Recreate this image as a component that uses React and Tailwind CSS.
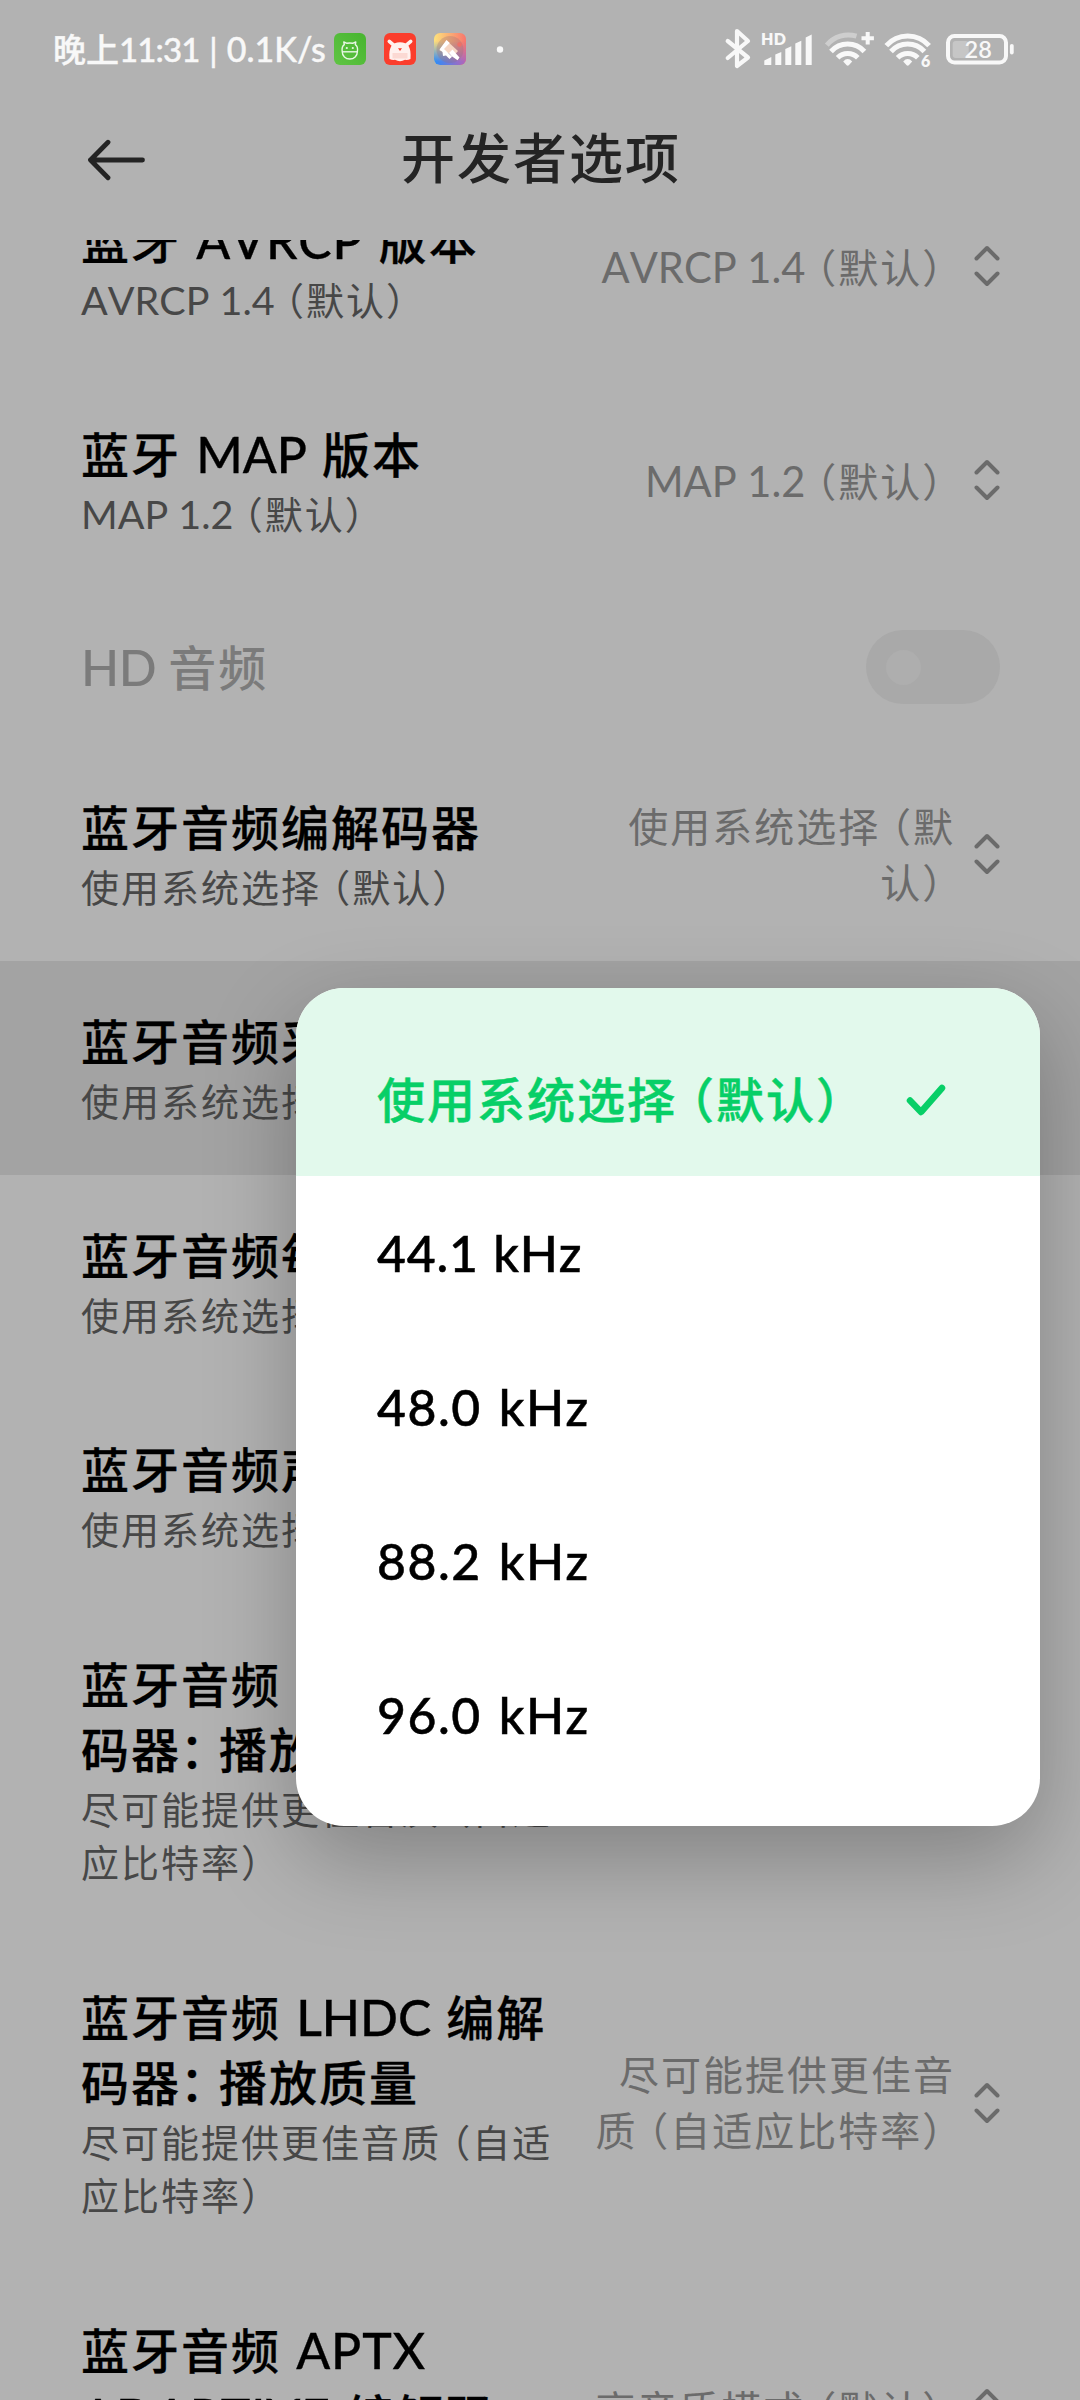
import React from "react";

const ROWS = [
  { id: "avrcp", title: ["蓝牙 AVRCP 版本"], summary: ["AVRCP 1.4（默认）"], value: ["AVRCP 1.4（默认）"] },
  { id: "map", title: ["蓝牙 MAP 版本"], summary: ["MAP 1.2（默认）"], value: ["MAP 1.2（默认）"] },
  { id: "hd", title: ["HD 音频"], toggle: true },
  { id: "codec", title: ["蓝牙音频编解码器"], summary: ["使用系统选择（默认）"], value: ["使用系统选择（默", "认）"] },
  { id: "rate", title: ["蓝牙音频采样率"], summary: ["使用系统选择（默认）"], value: ["使用系统选择（默", "认）"], active: true },
  { id: "bits", title: ["蓝牙音频每样本位数"], summary: ["使用系统选择（默认）"], value: ["使用系统选择（默", "认）"] },
  { id: "channel", title: ["蓝牙音频声道模式"], summary: ["使用系统选择（默认）"], value: ["使用系统选择（默", "认）"] },
  {
    id: "ldac",
    title: ["蓝牙音频 LDAC 编解", "码器：播放质量"],
    summary: ["尽可能提供更佳音质（自适", "应比特率）"],
    value: ["尽可能提供更佳音", "质（自适应比特率）"]
  },
  {
    id: "lhdc",
    title: ["蓝牙音频 LHDC 编解", "码器：播放质量"],
    summary: ["尽可能提供更佳音质（自适", "应比特率）"],
    value: ["尽可能提供更佳音", "质（自适应比特率）"]
  },
  {
    id: "aptx",
    title: ["蓝牙音频 APTX", "ADAPTIVE 编解码"],
    summary: ["高音质模式（默认）"],
    value: ["高音质模式（默认）"]
  }
];

const OPTIONS = ["使用系统选择（默认）", "44.1 kHz", "48.0 kHz", "88.2 kHz", "96.0 kHz"];

const PUNCTUATION = {
  "（": "-ml-[0.23em]",
  "）": "-mr-[0.23em]",
  "：": "-ml-[1px] -mr-[0.23em]"
};

// Full-width punctuation is tightened, Latin runs are set a touch larger with their own tracking
function Text({ children, latin = "tracking-normal" }) {
  return children.split(/([（）：]|[!-~]+(?: [!-~]+)*)/).map((part, i) => {
    if (PUNCTUATION[part]) return <span key={i} className={PUNCTUATION[part]}>{part}</span>;
    if (/[!-~]/.test(part)) return <span key={i} className={`text-[1.04em] [font-kerning:none] ${latin}`}>{part}</span>;
    return part;
  });
}

function Lines({ lines, className, latin }) {
  return (
    <div className={className}>
      {lines.map((line) => (
        <div key={line} className="whitespace-nowrap h-[1lh]"><Text latin={latin}>{line}</Text></div>
      ))}
    </div>
  );
}

function Chevrons() {
  return (
    <svg width="26" height="42" viewBox="0 0 26 42" fill="none" stroke="#6b6b6b" strokeWidth="4" strokeLinecap="round" strokeLinejoin="round" className="shrink-0">
      <path d="M2.5 13.5 L13 3 L23.5 13.5" />
      <path d="M2.5 28.5 L13 39 L23.5 28.5" />
    </svg>
  );
}

function Row({ row }) {
  if (row.toggle) {
    return (
      <div className="h-[160px] shrink-0 pl-[81px] pr-20 flex items-center justify-between">
        <div className="text-[48px] leading-[66px] font-medium text-[#7b7b7b] pt-px [word-spacing:-2px]"><Text latin="tracking-[-0.5px]">{row.title[0]}</Text></div>
        <div className="w-[134px] h-[74px] rounded-full bg-[#a9a9a9] flex items-center pl-5">
          <div className="w-[35px] h-[35px] rounded-full bg-[#aeaeae]" />
        </div>
      </div>
    );
  }
  return (
    <div className={`shrink-0 pl-[81px] pr-20 py-[47px] flex items-center ${row.active ? "bg-[#a3a3a3]" : ""}`}>
      <div className="flex-1 min-w-0">
        <Lines
          lines={row.title}
          latin={/AVRCP|APTX/.test(row.title[0]) ? "tracking-[0.9px]" : "tracking-normal"}
          className="text-[48px] leading-[66px] font-medium text-black pt-px [word-spacing:1px] [-webkit-text-stroke:0.3px]"
        />
        <Lines lines={row.summary} className="text-[38px] leading-[53px] text-[#474747]" />
      </div>
      <Lines lines={row.value} className="text-[40px] leading-[56px] text-[#6b6b6b] text-right mr-[19px] pt-px" />
      <Chevrons />
    </div>
  );
}

function AppIcons() {
  return (
    <svg width="180" height="40" viewBox="330 29 180 40" className="shrink-0">
      <defs>
        <linearGradient id="green" x1="0" y1="1" x2="1" y2="0">
          <stop offset="0" stopColor="#60c444" />
          <stop offset="1" stopColor="#47b52f" />
        </linearGradient>
        <linearGradient id="warm" x1="0" y1="0" x2="1" y2="0">
          <stop offset="0" stopColor="#fde27c" />
          <stop offset="1" stopColor="#f8766c" />
        </linearGradient>
        <linearGradient id="cool" x1="0" y1="0" x2="1" y2="0">
          <stop offset="0" stopColor="#2a8dfa" />
          <stop offset="1" stopColor="#b565b8" />
        </linearGradient>
        <linearGradient id="fade" x1="0" y1="0" x2="0" y2="1">
          <stop offset="0.25" stopColor="#000" />
          <stop offset="0.9" stopColor="#fff" />
        </linearGradient>
        <mask id="lower">
          <rect x="434" y="33" width="32" height="32" fill="url(#fade)" />
        </mask>
      </defs>

      {/* Android robot */}
      <rect x="334" y="33" width="32" height="32" rx="6" fill="url(#green)" />
      <g fill="none" stroke="#e9f7e5" strokeWidth="1.4" strokeLinejoin="round">
        <path d="M342.2 51.5 C341.6 47.5 343 45.5 344.3 44.6 L343.8 42 L347 43.3 Q349.8 42.6 352.6 43.3 L355.8 42 L355.3 44.6 C356.8 45.5 358 47.5 357.4 51.5 C357.4 56 354 59 349.8 59 C345.6 59 342.2 56 342.2 51.5 Z" />
        <path d="M342.2 51.8 H357.4" />
      </g>
      <circle cx="346.8" cy="48" r="1.1" fill="#e9f7e5" />
      <circle cx="352.8" cy="48" r="1.1" fill="#e9f7e5" />

      {/* Mi bunny */}
      <rect x="384" y="33" width="32" height="32" rx="6" fill="#fb3d2c" />
      <path d="M389.3 41.3 L393.4 44.8 M410.7 41.3 L406.6 44.8" stroke="#fff1ee" strokeWidth="3.6" strokeLinecap="round" />
      <path d="M389.5 59 C388.5 47 392 42.3 400 42.3 C408 42.3 411.5 47 410.5 59 Q408 60.2 405 59.8 Q400 62.5 395 59.8 Q392 60.2 389.5 59 Z" fill="#fff1ee" />
      <path d="M392.5 53 H407.5 V58.5 H392.5 Z" fill="#fbd9d3" />
      <path d="M398 48.3 H402 L400 51 Z" fill="#fb3d2c" />

      {/* Themes */}
      <rect x="434" y="33" width="32" height="32" rx="6" fill="url(#warm)" />
      <rect x="434" y="33" width="32" height="32" rx="6" fill="url(#cool)" mask="url(#lower)" />
      <circle cx="450" cy="49.5" r="13.5" fill="#93707a" fillOpacity="0.3" />
      <circle cx="459.5" cy="44.5" r="2.2" fill="#ee6f66" />
      <path d="M446.5 40.5 L458 51 L454.5 55 L439.5 50.5 Z" fill="#f6d6c4" />
      <path d="M446.5 40 L449.8 43 L444 49 L452 56.8 L449.5 59 L446 55.5 L443 56 L442.5 52 L439.5 49.5 Z M452.5 49.5 L455.5 53 L459.5 57.5 L457.5 60.3 L451.5 56 L449 53 Z" fill="#fff" />

      <circle cx="500" cy="49.5" r="3.2" fill="#f8f8f8" />
    </svg>
  );
}

function Wifi() {
  return (
    <>
      <g fill="none" strokeWidth="5" strokeLinecap="butt">
        <path d="M831 51.5 A22.4 22.4 0 0 1 864.4 51.5" />
        <path d="M837.6 57.8 A14 14 0 0 1 857.8 57.8" />
      </g>
      <path d="M843.2 61.4 Q847.7 56.8 852.2 61.4 L849 65 Q847.7 66.3 846.4 65 Z" fill="#f8f8f8" stroke="none" />
    </>
  );
}

function SystemIcons() {
  return (
    <svg width="296" height="44" viewBox="722 27 296 44" stroke="#f8f8f8" fill="none" className="shrink-0 font-[Lato] tracking-normal">
      <path d="M727.7 41 L748 57.5 L737 66 V31 L748 41 L727.7 58" strokeWidth="4.2" strokeLinecap="round" strokeLinejoin="round" />

      <g fill="#f8f8f8" stroke="none">
        <text x="761" y="44.8" fontSize="16" fontWeight="800" textLength="25">HD</text>
        <path d="M764.3 60.5 L771.3 57 V65 H764.3 Z" />
        <path d="M775.3 54.5 L781.3 52 V65 H775.3 Z" />
        <path d="M785.3 49 L791.3 46.3 V65 H785.3 Z" />
        <path d="M795.3 43.5 L801.3 40.7 V65 H795.3 Z" />
        <path d="M805.7 37.5 L811.7 34.5 V65 H805.7 Z" />
      </g>

      {/* Dual wifi, weak */}
      <path d="M826.8 45.2 A28 28 0 0 1 856.5 36.2" stroke="#cecece" strokeWidth="5" />
      <Wifi />
      <path d="M867.7 32 V44.4 M861.5 38.2 H873.9" strokeWidth="4" />

      {/* Wifi 6 */}
      <g transform="translate(60 0)">
        <path d="M826.3 45.7 A28.5 28.5 0 0 1 869.1 45.7" strokeWidth="5" />
        <Wifi />
      </g>
      <text x="921" y="67" fontSize="16" fontWeight="800" fill="#f8f8f8" stroke="none">6</text>

      {/* Battery */}
      <rect x="952.7" y="41" width="16" height="17" rx="3" fill="#c6c6c6" stroke="none" />
      <rect x="948" y="36" width="58" height="26.5" rx="6.5" strokeWidth="4" />
      <path d="M1011.8 45.8 V52.6" strokeWidth="3.8" strokeLinecap="round" />
      <text x="964.5" y="58" fontSize="23.5" fontWeight="600" fill="#f8f8f8" stroke="none">28</text>
    </svg>
  );
}

function StatusBar() {
  return (
    <div className="h-[98px] shrink-0 pl-[53px] pr-[62px] flex items-center text-[#f8f8f8]">
      <div className="w-[277px] shrink-0 text-[33px] font-medium whitespace-nowrap tracking-normal [word-spacing:2.5px] [-webkit-text-stroke:0.4px]">
        晚上<span className="tracking-[-0.9px]">11:31 | </span><span className="text-[34px]">0.1K/s</span>
      </div>
      <AppIcons />
      <div className="flex-1" />
      <SystemIcons />
    </div>
  );
}

function OptionMenu() {
  return (
    <div className="absolute left-[296px] top-[988px] w-[744px] rounded-[48px] bg-white overflow-hidden pb-[34px] shadow-[0_32px_90px_rgba(0,0,0,0.27)]">
      {OPTIONS.map((option, i) => (
        <div
          key={option}
          className={`pl-[81px] pr-[94px] flex items-center justify-between text-[48px] font-medium whitespace-nowrap [-webkit-text-stroke:0.5px] ${
            i === 0 ? "h-[188px] pt-[36px] bg-[#e2f9ec] text-[#07cf67]" : "h-[154px] text-black"
          }`}
        >
          <div><Text latin={option.includes(".1") ? "tracking-[0.8px] [word-spacing:1px]" : "tracking-[1.5px] [word-spacing:3px]"}>{option}</Text></div>
          {i === 0 && (
            <svg width="40" height="34" viewBox="0 0 40 34" fill="none" stroke="#07cf67" strokeWidth="6.5" strokeLinecap="round" strokeLinejoin="round">
              <path d="M4 17.5 L15 29 L36 5" />
            </svg>
          )}
        </div>
      ))}
    </div>
  );
}

export default function App() {
  return (
    <div className="relative w-[1080px] h-[2400px] overflow-hidden bg-[#b2b2b2] font-[Lato,'Noto_Sans_CJK_SC',sans-serif] tracking-[2px] flex flex-col">
      <StatusBar />
      <header className="h-[142px] shrink-0 px-[86px] pb-5 flex items-center text-[#242424]">
        <svg width="60" height="44" viewBox="0 -2 60 44" fill="none" stroke="#242424" strokeWidth="4.8" strokeLinecap="round" strokeLinejoin="round">
          <path d="M22 3.3 L4.5 21 L22 38.7 M4.5 21 H56.5" />
        </svg>
        <div className="flex-1 mr-[58px] text-center text-[54px] leading-[66px] font-medium">开发者选项</div>
      </header>
      <main className="flex-1 min-h-0 overflow-hidden">
        <div className="-mt-[81px] flex flex-col">
          {ROWS.map((row) => <Row key={row.id} row={row} />)}
        </div>
      </main>
      <OptionMenu />
    </div>
  );
}
